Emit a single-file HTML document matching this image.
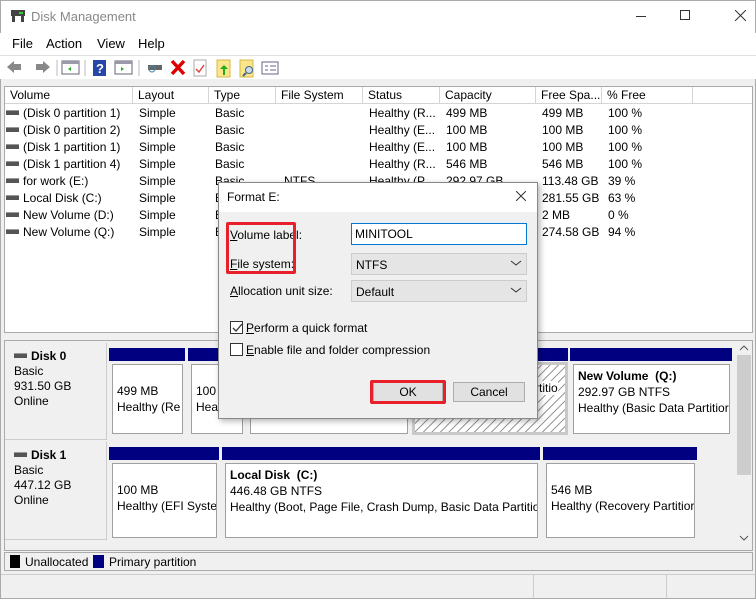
<!DOCTYPE html>
<html><head><meta charset="utf-8"><style>
*{margin:0;padding:0;box-sizing:border-box}
body{width:756px;height:599px;background:#f0f0f0;font-family:"Liberation Sans",sans-serif;font-size:12px;color:#000;position:relative;overflow:hidden}
.a{position:absolute;white-space:nowrap}
.hdr{position:absolute;top:87px;height:17px;border-right:1px solid #d5d5d5;padding-left:5px;line-height:17px;background:#fff}
.row{position:absolute;left:6px;height:17px;line-height:17px;width:740px}
.row span{position:absolute}
.dk{display:inline-block;width:13px;height:5px;background:#555;border-top:1px solid #999;vertical-align:middle;margin-right:4px;position:relative;top:-1px}
.bar{position:absolute;background:#000080;height:13px}
.box{position:absolute;background:#fff;border:1px solid #a0a0a0;padding:3px 0 0 4px;line-height:16px;overflow:hidden;white-space:nowrap}
.u{text-decoration:underline}
</style></head><body>
<div class="a" style="left:0;top:0;width:756px;height:33px;background:#fff"></div>
<div class="a" style="left:0;top:0;width:756px;height:599px;border:1px solid #aaa"></div>
<svg class="a" style="left:10px;top:9px" width="16" height="14"><rect x="1" y="1" width="14" height="6" fill="#444"/><rect x="9" y="3" width="4" height="2" fill="#3c3"/><rect x="2" y="7" width="3" height="6" fill="#444"/><rect x="11" y="7" width="3" height="6" fill="#444"/></svg>
<div class="a" style="left:31px;top:9px;font-size:13px;color:#888">Disk Management</div>
<div class="a" style="left:636px;top:16px;width:10px;height:1px;background:#333"></div>
<div class="a" style="left:680px;top:10px;width:10px;height:10px;border:1px solid #333"></div>
<svg class="a" style="left:735px;top:10px" width="11" height="11"><path d="M0 0L11 11M11 0L0 11" stroke="#333" stroke-width="1"/></svg>
<div class="a" style="left:0;top:33px;width:756px;height:22px;background:#fff"></div>
<div class="a" style="left:12px;top:36px;font-size:13px">File</div>
<div class="a" style="left:46px;top:36px;font-size:13px">Action</div>
<div class="a" style="left:97px;top:36px;font-size:13px">View</div>
<div class="a" style="left:138px;top:36px;font-size:13px">Help</div>
<div class="a" style="left:0;top:55px;width:756px;height:24px;background:#fff;border-top:1px solid #e0e0e0"></div>
<svg class="a" style="left:5px;top:58px" width="280" height="20">
<path d="M2 9 L9 3 V6 H16 V12 H9 V15Z" fill="#888"/><path d="M45 9 L38 3 V6 H31 V12 H38 V15Z" fill="#888"/>
<line x1="52" y1="2" x2="52" y2="18" stroke="#bbb"/>
<rect x="57" y="3" width="17" height="13" fill="#fff" stroke="#667"/><rect x="57" y="3" width="17" height="3" fill="#99a"/><path d="M63 11 l3 -2 v4z" fill="#2a2"/>
<line x1="80" y1="2" x2="80" y2="18" stroke="#bbb"/>
<rect x="88" y="2" width="13" height="16" fill="#2647a8"/><text x="91" y="15" fill="#fff" font-size="13" font-weight="bold" font-family="Liberation Sans">?</text>
<rect x="110" y="3" width="17" height="13" fill="#fff" stroke="#667"/><rect x="110" y="3" width="17" height="3" fill="#99a"/><path d="M116 9 l3 2 l-3 2z" fill="#2a2"/>
<line x1="134" y1="2" x2="134" y2="18" stroke="#bbb"/>
<rect x="143" y="7" width="14" height="5" fill="#666"/><circle cx="147" cy="11" r="3" fill="none" stroke="#48a"/>
<path d="M167 3 L179 16 M179 3 L167 16" stroke="#d00" stroke-width="3.5"/>
<rect x="189" y="2" width="12" height="16" fill="#fff" stroke="#aaa"/><path d="M191 11 l3 3 l5 -7" stroke="#d44" fill="none" stroke-width="1.5"/>
<rect x="212" y="2" width="13" height="17" fill="#fbe68a" stroke="#d4b84a"/><path d="M218 17 v-6 h-3 l4 -4 l4 4 h-3 v6z" fill="#2a2"/>
<rect x="235" y="2" width="13" height="17" fill="#fbe68a" stroke="#d4b84a"/><circle cx="244" cy="12" r="3.5" fill="#cde" stroke="#468"/><line x1="241" y1="15" x2="238" y2="18" stroke="#468" stroke-width="2"/>
<rect x="257" y="4" width="16" height="12" fill="#fff" stroke="#668"/><path d="M260 8h3M260 12h3M265 8h6M265 12h6" stroke="#668"/>
</svg>
<div class="a" style="left:4px;top:86px;width:749px;height:247px;background:#fff;border:1px solid #aaa"></div>
<div class="hdr" style="left:5px;width:128px">Volume</div>
<div class="hdr" style="left:133px;width:76px">Layout</div>
<div class="hdr" style="left:209px;width:67px">Type</div>
<div class="hdr" style="left:276px;width:87px">File System</div>
<div class="hdr" style="left:363px;width:77px">Status</div>
<div class="hdr" style="left:440px;width:96px">Capacity</div>
<div class="hdr" style="left:536px;width:66px">Free Spa...</div>
<div class="hdr" style="left:602px;width:91px">% Free</div>
<div class="a" style="left:5px;top:103px;width:747px;height:1px;background:#d5d5d5"></div>
<div class="row" style="top:105px"><span><i class="dk"></i>(Disk 0 partition 1)</span><span style="left:133px">Simple</span><span style="left:209px">Basic</span><span style="left:363px">Healthy (R...</span><span style="left:440px">499 MB</span><span style="left:536px">499 MB</span><span style="left:602px">100 %</span></div>
<div class="row" style="top:122px"><span><i class="dk"></i>(Disk 0 partition 2)</span><span style="left:133px">Simple</span><span style="left:209px">Basic</span><span style="left:363px">Healthy (E...</span><span style="left:440px">100 MB</span><span style="left:536px">100 MB</span><span style="left:602px">100 %</span></div>
<div class="row" style="top:139px"><span><i class="dk"></i>(Disk 1 partition 1)</span><span style="left:133px">Simple</span><span style="left:209px">Basic</span><span style="left:363px">Healthy (E...</span><span style="left:440px">100 MB</span><span style="left:536px">100 MB</span><span style="left:602px">100 %</span></div>
<div class="row" style="top:156px"><span><i class="dk"></i>(Disk 1 partition 4)</span><span style="left:133px">Simple</span><span style="left:209px">Basic</span><span style="left:363px">Healthy (R...</span><span style="left:440px">546 MB</span><span style="left:536px">546 MB</span><span style="left:602px">100 %</span></div>
<div class="row" style="top:173px"><span><i class="dk"></i>for work (E:)</span><span style="left:133px">Simple</span><span style="left:209px">Basic</span><span style="left:278px">NTFS</span><span style="left:363px">Healthy (P...</span><span style="left:440px">292.97 GB</span><span style="left:536px">113.48 GB</span><span style="left:602px">39 %</span></div>
<div class="row" style="top:190px"><span><i class="dk"></i>Local Disk (C:)</span><span style="left:133px">Simple</span><span style="left:209px">Basic</span><span style="left:536px">281.55 GB</span><span style="left:602px">63 %</span></div>
<div class="row" style="top:207px"><span><i class="dk"></i>New Volume (D:)</span><span style="left:133px">Simple</span><span style="left:209px">Basic</span><span style="left:536px">2 MB</span><span style="left:602px">0 %</span></div>
<div class="row" style="top:224px"><span><i class="dk"></i>New Volume (Q:)</span><span style="left:133px">Simple</span><span style="left:209px">Basic</span><span style="left:536px">274.58 GB</span><span style="left:602px">94 %</span></div>

<div class="a" style="left:4px;top:340px;width:749px;height:211px;background:#f0f0f0;border:1px solid #aaa"></div>
<div class="a" style="left:5px;top:343px;width:102px;height:97px;border-right:1px solid #ccc;border-bottom:1px solid #ccc;padding:6px 0 0 9px;line-height:15px"><b><i class="dk"></i>Disk 0</b><br>Basic<br>931.50 GB<br>Online</div>
<div class="a" style="left:5px;top:442px;width:102px;height:98px;border-right:1px solid #ccc;border-bottom:1px solid #ccc;padding:6px 0 0 9px;line-height:15px"><b><i class="dk"></i>Disk 1</b><br>Basic<br>447.12 GB<br>Online</div>
<div class="bar" style="left:109px;top:348px;width:76px"></div><div class="box" style="left:112px;top:364px;width:71px;height:70px;padding-top:18px">499 MB<br>Healthy (Re</div>
<div class="bar" style="left:188px;top:348px;width:56px"></div><div class="box" style="left:191px;top:364px;width:52px;height:70px;padding-top:18px">100 MB<br>Healthy</div>
<div class="bar" style="left:246px;top:348px;width:164px"></div><div class="box" style="left:250px;top:364px;width:158px;height:70px"></div>
<div class="bar" style="left:412px;top:348px;width:156px"></div>
<div class="a" style="left:412px;top:362px;width:156px;height:73px;border:3px solid #c8c8c8;background:repeating-linear-gradient(135deg,#fff 0 5px,#999 5px 6px);padding:15px 0 0 120px;line-height:16px"><span style="background:#fff">rtitio</span></div>
<div class="bar" style="left:570px;top:348px;width:162px"></div><div class="box" style="left:573px;top:364px;width:157px;height:70px"><b>New Volume&nbsp; (Q:)</b><br>292.97 GB NTFS<br>Healthy (Basic Data Partitior</div>
<div class="bar" style="left:109px;top:447px;width:110px"></div><div class="box" style="left:112px;top:463px;width:105px;height:75px;padding-top:18px">100 MB<br>Healthy (EFI Syster</div>
<div class="bar" style="left:222px;top:447px;width:318px"></div><div class="box" style="left:225px;top:463px;width:313px;height:75px"><b>Local Disk&nbsp; (C:)</b><br>446.48 GB NTFS<br>Healthy (Boot, Page File, Crash Dump, Basic Data Partition</div>
<div class="bar" style="left:543px;top:447px;width:154px"></div><div class="box" style="left:546px;top:463px;width:149px;height:75px;padding-top:18px">546 MB<br>Healthy (Recovery Partitior</div>
<div class="a" style="left:736px;top:343px;width:16px;height:206px;background:#f0f0f0"></div>
<div class="a" style="left:737px;top:355px;width:14px;height:120px;background:#cdcdcd"></div>
<svg class="a" style="left:739px;top:344px" width="10" height="200"><path d="M1 6l4-4l4 4M1 192l4 4l4-4" stroke="#555" fill="none"/></svg>
<div class="a" style="left:4px;top:552px;width:749px;height:19px;border:1px solid #aaa;background:#f0f0f0"></div>
<div class="a" style="left:10px;top:555px;width:10px;height:13px;background:#000"></div>
<div class="a" style="left:25px;top:555px">Unallocated</div>
<div class="a" style="left:93px;top:555px;width:11px;height:13px;background:#000080"></div>
<div class="a" style="left:109px;top:555px">Primary partition</div>
<div class="a" style="left:1px;top:574px;width:754px;height:24px;border-top:1px solid #ccc"></div>
<div class="a" style="left:533px;top:575px;width:1px;height:23px;background:#ccc"></div>
<div class="a" style="left:666px;top:575px;width:1px;height:23px;background:#ccc"></div>

<!-- dialog -->
<div class="a" style="left:218px;top:182px;width:320px;height:237px;background:#f0f0f0;border:1px solid #888;box-shadow:2px 2px 6px rgba(0,0,0,.3)"></div>
<div class="a" style="left:219px;top:183px;width:318px;height:29px;background:#fff"></div>
<div class="a" style="left:227px;top:190px">Format E:</div>
<svg class="a" style="left:516px;top:191px" width="10" height="10"><path d="M0 0L10 10M10 0L0 10" stroke="#333"/></svg>
<div class="a" style="left:230px;top:228px"><span class="u">V</span>olume label:</div>
<div class="a" style="left:230px;top:257px"><span class="u">F</span>ile system:</div>
<div class="a" style="left:226px;top:222px;width:70px;height:52px;border:3px solid #e8202a;border-radius:2px"></div>
<div class="a" style="left:230px;top:284px"><span class="u">A</span>llocation unit size:</div>
<div class="a" style="left:351px;top:223px;width:176px;height:22px;background:#fff;border:1px solid #0078d7;padding:3px 0 0 3px">MINITOOL</div>
<div class="a" style="left:351px;top:253px;width:176px;height:22px;background:#e5e5e5;border:1px solid #ccc;padding:4px 0 0 4px">NTFS</div>
<div class="a" style="left:351px;top:280px;width:176px;height:22px;background:#e5e5e5;border:1px solid #ccc;padding:4px 0 0 4px">Default</div>
<svg class="a" style="left:510px;top:258px" width="12" height="40"><path d="M1 3 l5 4 l5 -4M1 30 l5 4 l5 -4" stroke="#333" fill="none"/></svg>
<div class="a" style="left:230px;top:321px;width:13px;height:13px;border:1px solid #333;background:#fff"></div>
<svg class="a" style="left:231px;top:322px" width="12" height="12"><path d="M2 6 l3 3 l6 -7" stroke="#333" fill="none" stroke-width="1.3"/></svg>
<div class="a" style="left:246px;top:321px"><span class="u">P</span>erform a quick format</div>
<div class="a" style="left:230px;top:343px;width:13px;height:13px;border:1px solid #333;background:#fff"></div>
<div class="a" style="left:246px;top:343px"><span class="u">E</span>nable file and folder compression</div>
<div class="a" style="left:373px;top:382px;width:70px;height:20px;background:#e1e1e1;border:1px solid #adadad;text-align:center;line-height:18px">OK</div>
<div class="a" style="left:370px;top:380px;width:76px;height:24px;border:3px solid #e8202a;border-radius:2px"></div>
<div class="a" style="left:453px;top:382px;width:72px;height:20px;background:#e1e1e1;border:1px solid #adadad;text-align:center;line-height:18px">Cancel</div>
</body></html>
